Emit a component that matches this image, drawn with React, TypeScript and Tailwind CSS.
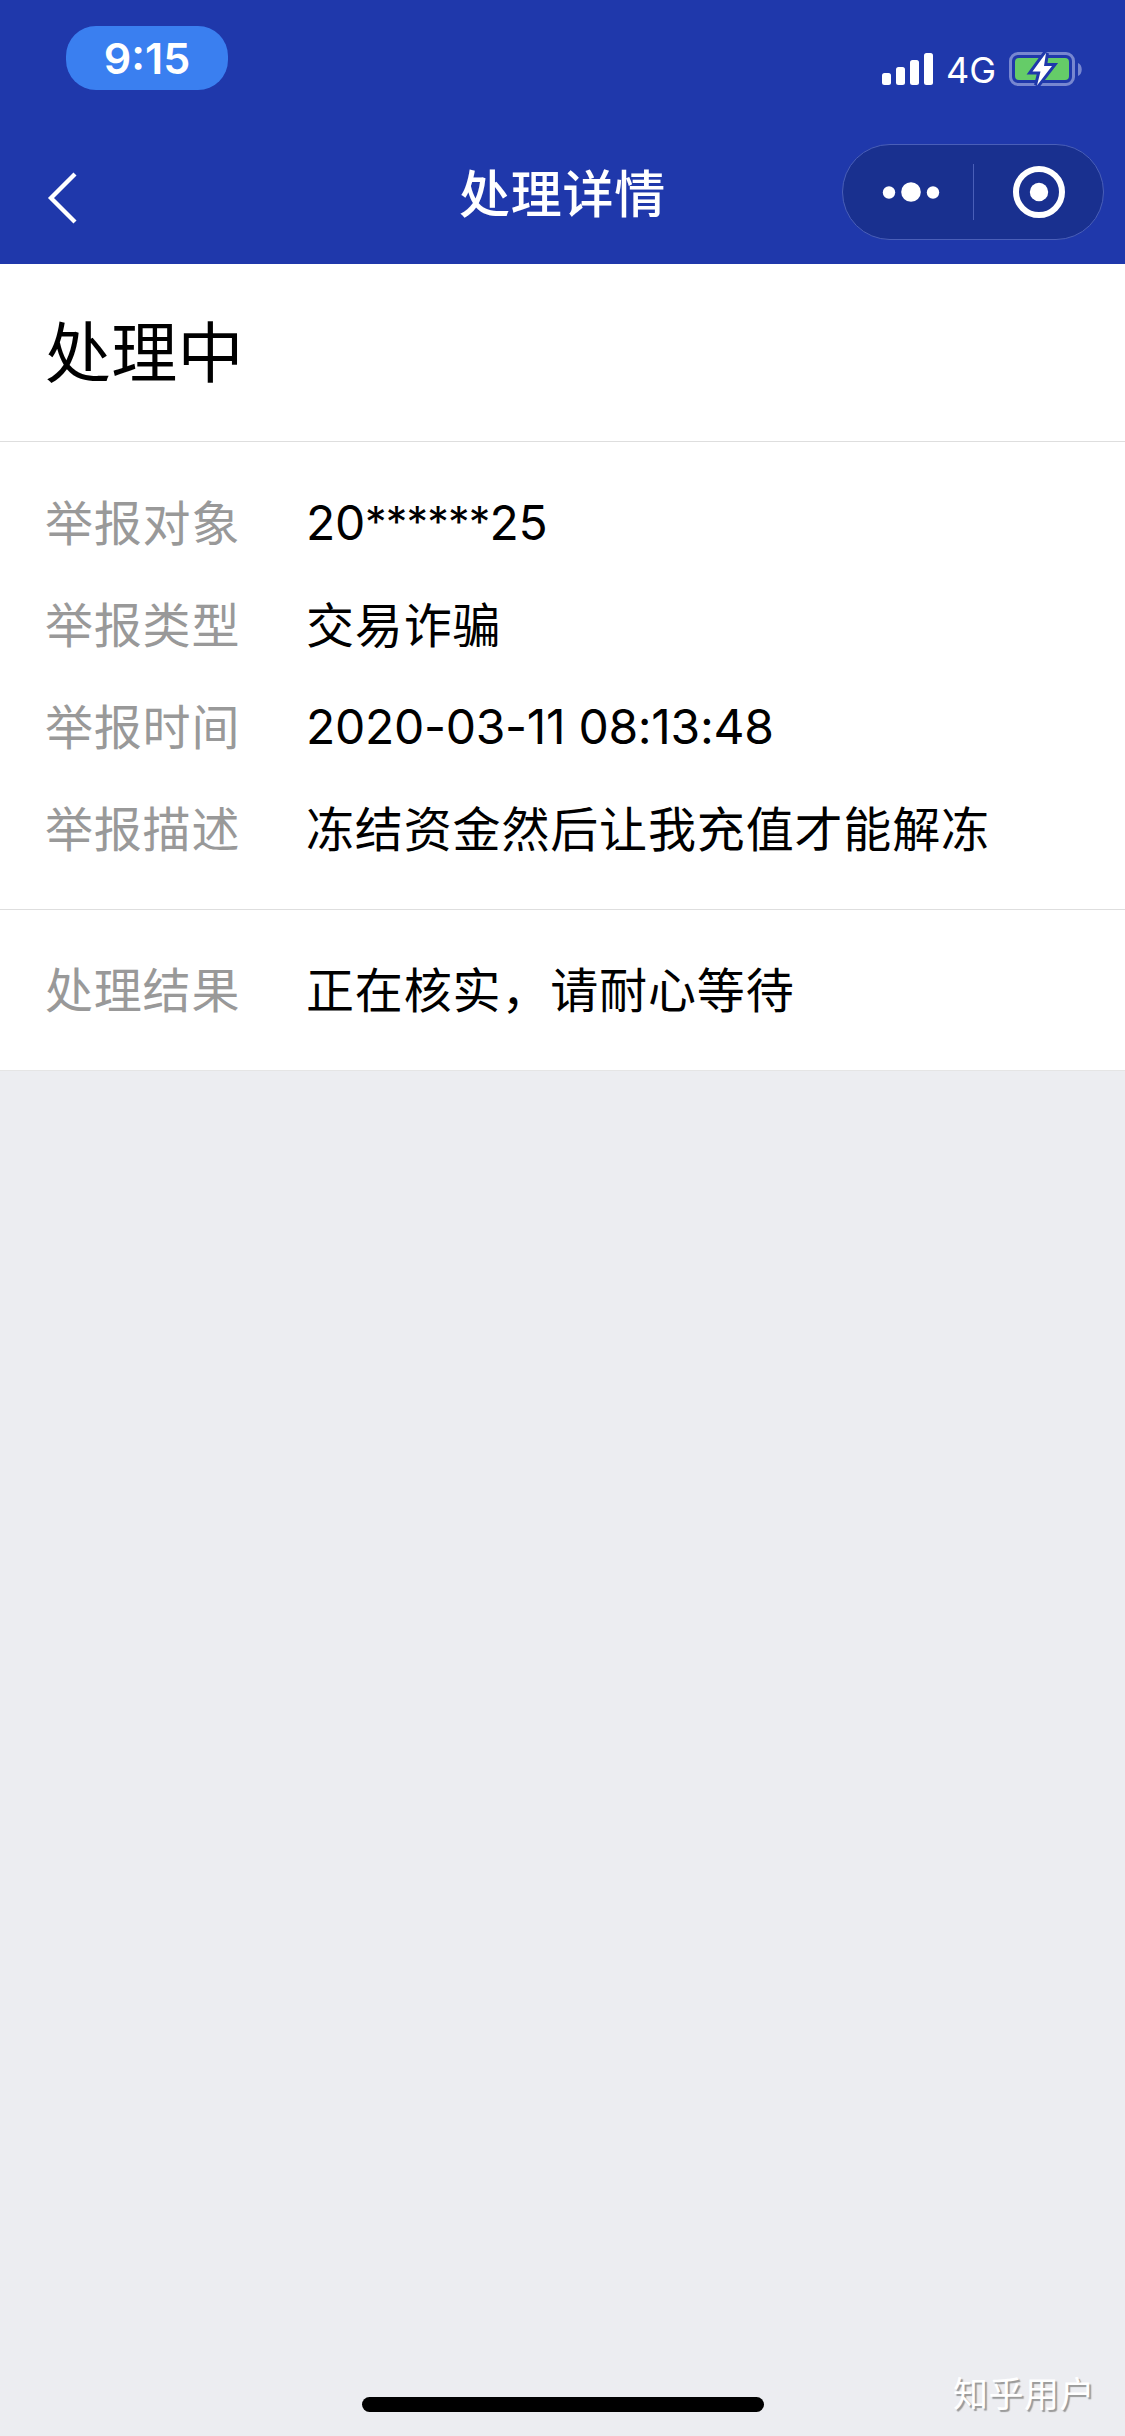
import React from "react";

const details = [
  {
    label: "举报对象",
    value: (
      <>
        20<span className="align-[3px] text-[43px] leading-none tracking-[-0.8px]">******</span>25
      </>
    ),
    numeric: true,
  },
  { label: "举报类型", value: "交易诈骗" },
  { label: "举报时间", value: "2020-03-11 08:13:48", numeric: true },
  { label: "举报描述", value: "冻结资金然后让我充值才能解冻" },
];

function Row({ label, value, numeric }: { label: string; value: React.ReactNode; numeric?: boolean }) {
  return (
    <div className="flex h-[102px] items-center whitespace-nowrap text-[48px] leading-[70px]">
      <span className="w-[261px] shrink-0 pt-[2px] tracking-[0.8px] text-[#999999]">{label}</span>
      <span className={numeric ? "tracking-[-0.3px] text-black" : "pt-[2px] tracking-[0.85px] text-black"}>{value}</span>
    </div>
  );
}

function StatusBar() {
  return (
    <div className="flex h-[120px] items-start justify-between pt-[26px] pl-[66px] pr-[41px] text-white">
      <div className="flex h-[64px] w-[162px] items-center justify-center rounded-[30px] bg-[#3a7ff0] pt-[1px] text-[43px] leading-none font-semibold">
        9:15
      </div>
      <div className="flex pt-[24px]">
        <svg width="54" height="40" viewBox="0 0 54 40" fill="white">
          <rect x="0" y="23" width="9" height="12" rx="2.5" />
          <rect x="14" y="17" width="9" height="18" rx="2.5" />
          <rect x="28" y="10" width="9" height="25" rx="2.5" />
          <rect x="42" y="3" width="9" height="32" rx="2.5" />
        </svg>
        <span className="ml-[10px] w-[62px] text-[36px] leading-[41px]">4G</span>
        <svg width="76" height="40" viewBox="0 0 76 40">
          <rect x="2.5" y="3.5" width="63" height="31" rx="7.5" fill="none" stroke="#7787d0" strokeWidth="3" />
          <path d="M70 13c5 2 5 11 0 13z" fill="#7787d0" />
          <rect x="7" y="8" width="54" height="22" rx="4" fill="#65cc68" />
          <path d="M38 3 24.500 21.500h8L29 35.500l15-19.500h-8z" fill="white" stroke="#1f38ab" strokeWidth="6" />
          <path d="M38 3 24.500 21.500h8L29 35.500l15-19.500h-8z" fill="white" />
        </svg>
      </div>
    </div>
  );
}

function NavBar() {
  return (
    <div className="grid h-[144px] grid-cols-[1fr_auto_1fr] items-center px-[21px]">
      <svg width="34" height="56" viewBox="0 0 34 56" className="mt-[12px] ml-[25px]" fill="none" stroke="white" strokeWidth="4.3">
        <path d="M29 4 5 28l24 24" />
      </svg>
      <h1 className="pt-[5px] text-[51px] leading-[72px] font-medium tracking-[0.7px] text-white">处理详情</h1>
      <div className="flex h-[96px] w-[262px] items-center justify-self-end rounded-full border border-[#4a5fb8] bg-[#19308f]">
        <svg width="130" height="60" viewBox="0 0 130 60" fill="white">
          <circle cx="46" cy="30.5" r="6.2" />
          <circle cx="68" cy="30" r="9.8" />
          <circle cx="90" cy="30.5" r="6.2" />
        </svg>
        <div className="h-[56px] w-px bg-[#4a5fb8]" />
        <svg width="129" height="60" viewBox="0 0 129 60">
          <circle cx="65" cy="30" r="23" fill="none" stroke="white" strokeWidth="6" />
          <circle cx="65" cy="30" r="9.2" fill="white" />
        </svg>
      </div>
    </div>
  );
}

export default function App() {
  return (
    <div className="flex h-[2436px] w-[1125px] flex-col overflow-hidden bg-[#ecedf1] font-['Inter','Noto_Sans_CJK_SC',sans-serif]">
      <header className="h-[264px] shrink-0 bg-[#1f38ab]">
        <StatusBar />
        <NavBar />
      </header>
      <main className="bg-white">
        <h2 className="flex h-[178px] items-center border-b border-[#dedede] px-[45px] pt-px text-[66px] leading-[90px] tracking-[0.3px] text-black">
          处理中
        </h2>
        <section className="h-[468px] border-b border-[#dedede] px-[45px] pt-[30px]">
          {details.map((d) => (
            <Row key={d.label} {...d} />
          ))}
        </section>
        <section className="h-[161px] border-b border-[#e5e5e5] px-[45px] pt-[29px]">
          <Row label="处理结果" value="正在核实，请耐心等待" />
        </section>
      </main>
      <footer className="relative mt-auto flex h-[60px] justify-center">
        <div className="mt-[21px] h-[15px] w-[402px] rounded-full bg-black" />
        <span className="absolute right-[30px] bottom-[17px] text-[35px] leading-[50px] tracking-[0.5px] text-white [text-shadow:2px_2px_1px_#999999]">
          知乎用户
        </span>
      </footer>
    </div>
  );
}
